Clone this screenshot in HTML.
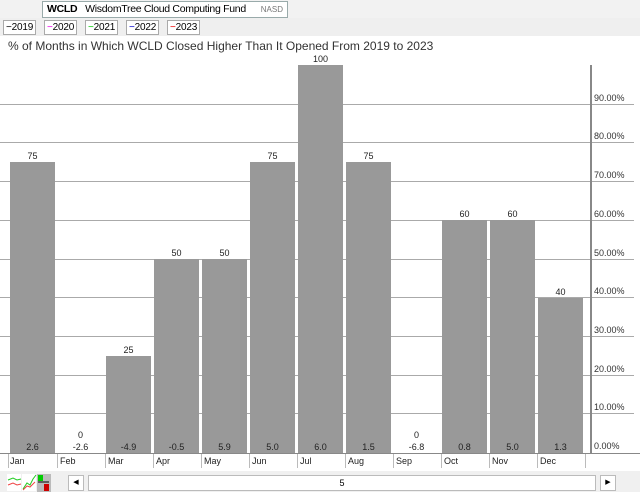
<!DOCTYPE html><html><head><style>
body{margin:0;width:640px;height:492px;background:#fff;font-family:"Liberation Sans",sans-serif;position:relative;overflow:hidden}
div{position:absolute;box-sizing:border-box}
.bar{background:#999;width:45px}
.v{font-size:9px;color:#222;width:45px;text-align:center}
.g{height:1px;background:#aaa;left:0;width:634px}
.yl{left:594px;font-size:9px;color:#333}
.m{font-size:9px;color:#222;top:456px}
.sep{top:454px;height:14px;width:1px;background:#bbb}
.btn{top:20px;height:15px;border:1px solid #aaa;background:#fff;font-size:10px;line-height:13px;padding:0 2px;letter-spacing:-0.2px}
</style></head><body>
<div style="left:0;top:0;width:640px;height:18px;background:#f2f2f2"></div>
<div style="left:0;top:18px;width:640px;height:18px;background:#efefef"></div>
<div style="left:42px;top:1px;width:246px;height:17px;border:1px solid #9aa;background:#fff;font-size:10.5px;line-height:15px;padding-left:4px;letter-spacing:-0.3px"><b>WCLD</b>&nbsp;&nbsp; WisdomTree Cloud Computing Fund<span style="position:absolute;right:4px;font-size:8px;color:#777;letter-spacing:0">NASD</span></div>
<div class="btn" style="left:3px">−2019</div>
<div class="btn" style="left:44px"><span style="color:#e0e">−</span>2020</div>
<div class="btn" style="left:85px"><span style="color:#0c0">−</span>2021</div>
<div class="btn" style="left:126px"><span style="color:#00c">−</span>2022</div>
<div class="btn" style="left:167px"><span style="color:#e00">−</span>2023</div>
<div style="left:8px;top:39px;font-size:12px;color:#333">% of Months in Which WCLD Closed Higher Than It Opened From 2019 to 2023</div>
<div class="g" style="top:104px"></div><div class="g" style="top:142px"></div><div class="g" style="top:181px"></div><div class="g" style="top:220px"></div><div class="g" style="top:259px"></div><div class="g" style="top:297px"></div><div class="g" style="top:336px"></div><div class="g" style="top:375px"></div><div class="g" style="top:413px"></div>
<div class="yl" style="top:93px">90.00%</div><div class="yl" style="top:131px">80.00%</div><div class="yl" style="top:170px">70.00%</div><div class="yl" style="top:209px">60.00%</div><div class="yl" style="top:248px">50.00%</div><div class="yl" style="top:286px">40.00%</div><div class="yl" style="top:325px">30.00%</div><div class="yl" style="top:364px">20.00%</div><div class="yl" style="top:402px">10.00%</div><div class="yl" style="top:441px">0.00%</div>
<div style="left:590px;top:65px;width:2px;height:388px;background:#888"></div>
<div style="left:0;top:453px;width:640px;height:1px;background:#888"></div>
<div class="bar" style="left:10px;top:162px;height:291px"></div>
<div class="bar" style="left:106px;top:356px;height:97px"></div>
<div class="bar" style="left:154px;top:259px;height:194px"></div>
<div class="bar" style="left:202px;top:259px;height:194px"></div>
<div class="bar" style="left:250px;top:162px;height:291px"></div>
<div class="bar" style="left:298px;top:65px;height:388px"></div>
<div class="bar" style="left:346px;top:162px;height:291px"></div>
<div class="bar" style="left:442px;top:220px;height:233px"></div>
<div class="bar" style="left:490px;top:220px;height:233px"></div>
<div class="bar" style="left:538px;top:298px;height:155px"></div>
<div class="v" style="left:10px;top:151px">75</div><div class="v" style="left:58px;top:430px">0</div><div class="v" style="left:106px;top:345px">25</div><div class="v" style="left:154px;top:248px">50</div><div class="v" style="left:202px;top:248px">50</div><div class="v" style="left:250px;top:151px">75</div><div class="v" style="left:298px;top:54px">100</div><div class="v" style="left:346px;top:151px">75</div><div class="v" style="left:394px;top:430px">0</div><div class="v" style="left:442px;top:209px">60</div><div class="v" style="left:490px;top:209px">60</div><div class="v" style="left:538px;top:287px">40</div>
<div class="v" style="left:10px;top:442px">2.6</div><div class="v" style="left:58px;top:442px">-2.6</div><div class="v" style="left:106px;top:442px">-4.9</div><div class="v" style="left:154px;top:442px">-0.5</div><div class="v" style="left:202px;top:442px">5.9</div><div class="v" style="left:250px;top:442px">5.0</div><div class="v" style="left:298px;top:442px">6.0</div><div class="v" style="left:346px;top:442px">1.5</div><div class="v" style="left:394px;top:442px">-6.8</div><div class="v" style="left:442px;top:442px">0.8</div><div class="v" style="left:490px;top:442px">5.0</div><div class="v" style="left:538px;top:442px">1.3</div>
<div class="sep" style="left:8px"></div><div class="sep" style="left:57px"></div><div class="sep" style="left:105px"></div><div class="sep" style="left:153px"></div><div class="sep" style="left:201px"></div><div class="sep" style="left:249px"></div><div class="sep" style="left:297px"></div><div class="sep" style="left:345px"></div><div class="sep" style="left:393px"></div><div class="sep" style="left:441px"></div><div class="sep" style="left:489px"></div><div class="sep" style="left:537px"></div><div class="sep" style="left:585px"></div>
<div class="m" style="left:10px">Jan</div><div class="m" style="left:60px">Feb</div><div class="m" style="left:108px">Mar</div><div class="m" style="left:156px">Apr</div><div class="m" style="left:204px">May</div><div class="m" style="left:252px">Jun</div><div class="m" style="left:300px">Jul</div><div class="m" style="left:348px">Aug</div><div class="m" style="left:396px">Sep</div><div class="m" style="left:444px">Oct</div><div class="m" style="left:492px">Nov</div><div class="m" style="left:540px">Dec</div>
<div style="left:0;top:471px;width:640px;height:21px;background:#f0f0f0"></div>
<svg style="position:absolute;left:7px;top:474px" width="44" height="18"><rect x="0" y="0" width="14" height="17" fill="#fff"/><path d="M1 6 L6 4 L10 6 L14 5" stroke="#2c2" fill="none"/><path d="M1 11 L6 9 L10 11 L14 10" stroke="#e44" fill="none"/><rect x="15" y="0" width="14" height="17" fill="#fff"/><path d="M16 15 L20 9 L23 11 L26 5 L29 1" stroke="#2c2" fill="none"/><path d="M16 16 L20 12 L23 13 L28 8" stroke="#e44" fill="none"/><rect x="30" y="0" width="14" height="18" fill="#bbb"/><rect x="31" y="1" width="5" height="6" fill="#0c0"/><rect x="37" y="10" width="5" height="7" fill="#c00"/><path d="M31 8 H42" stroke="#000"/></svg>
<div style="left:68px;top:475px;width:16px;height:16px;background:#fff;border:1px solid #bbb;font-size:7px;text-align:center;line-height:14px">◀</div>
<div style="left:88px;top:475px;width:508px;height:16px;background:#fff;border:1px solid #bbb;font-size:9px;text-align:center;line-height:14px">5</div>
<div style="left:600px;top:475px;width:16px;height:16px;background:#fff;border:1px solid #bbb;font-size:7px;text-align:center;line-height:14px">▶</div>
</body></html>
